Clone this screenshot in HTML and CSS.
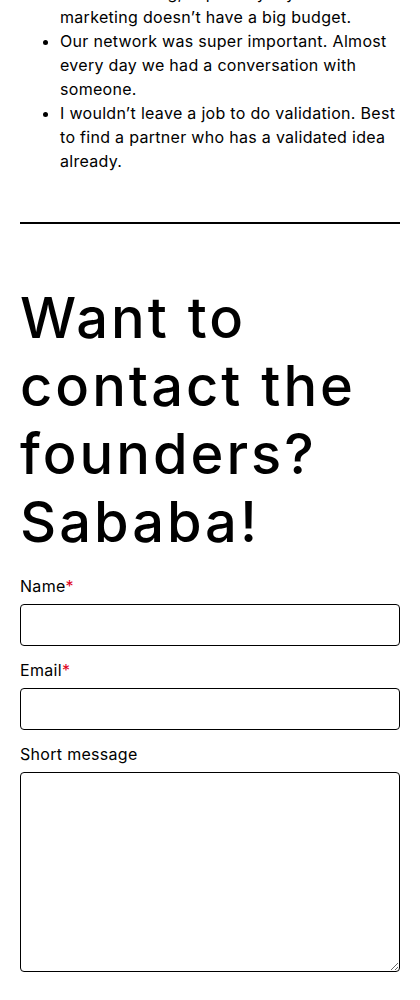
FILE: index.html
```html
<!DOCTYPE html>
<html lang="en">
<head>
<meta charset="utf-8">
<title>Contact the founders</title>
<link rel="stylesheet" href="styles.css">
</head>
<body>
<main class="page">
  <ul class="lessons">
    <li>Content is king, especially if your marketing doesn’t have a big budget.</li>
    <li>Our network was super important. Almost every day we had a conversation with someone.</li>
    <li>I wouldn’t leave a job to do validation. Best to find a partner who has a validated idea already.</li>
  </ul>
  <hr class="divider">
  <h2 class="title">Want to contact the founders? Sababa!</h2>
  <form class="contact">
    <label class="field">
      <span class="label">Name<span class="req">*</span></span>
      <input class="input" type="text">
    </label>
    <label class="field">
      <span class="label">Email<span class="req">*</span></span>
      <input class="input" type="email">
    </label>
    <label class="field">
      <span class="label">Short message</span>
      <textarea class="textarea"></textarea>
    </label>
  </form>
</main>
</body>
</html>
```
FILE: styles.css
```css
html, body {
  margin: 0;
  padding: 0;
  background: #fff;
}
body {
  font-family: Inter, "Open Sans", sans-serif;
  color: #000;
  font-size: 16px;
}
.page {
  padding: 0 20px;
  margin-top: -19px;
}
.lessons {
  margin: 0;
  padding-left: 40px;
  line-height: 24px;
  font-size: 16px;
  letter-spacing: 0.3px;
}
.divider {
  margin: 49px 0 0;
  border: 0;
  height: 2px;
  background: #000;
}
.title {
  margin: 60px 0 0;
  font-size: 56px;
  font-weight: 500;
  line-height: 68px;
  letter-spacing: 3px;
}
.contact {
  display: flex;
  flex-direction: column;
  gap: 12px;
  margin-top: 18px;
}
.field {
  display: flex;
  flex-direction: column;
  gap: 6px;
}
.label {
  font-size: 16px;
  line-height: 24px;
  letter-spacing: 0.3px;
}
.req {
  color: #e00020;
}
.input, .textarea {
  box-sizing: border-box;
  width: 100%;
  border: 1px solid #000;
  border-radius: 4px;
  font: inherit;
  margin: 0;
}
.input {
  height: 42px;
}
.textarea {
  height: 200px;
  display: block;
}
```
